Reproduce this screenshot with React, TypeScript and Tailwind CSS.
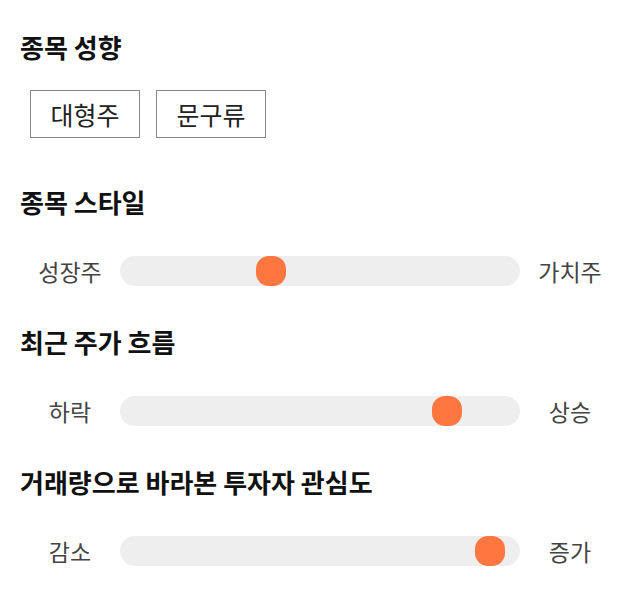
const font = { fontFamily: '"Noto Sans CJK KR", "Noto Sans", sans-serif' };

const Heading = ({ children, className = '' }: { children: string; className?: string }) => (
  <h2 className={`text-[26px] leading-[34px] font-bold text-[#111] ${className}`}>{children}</h2>
);

const SliderRow = ({ left, right, pos, className = '' }: { left: string; right: string; pos: number; className?: string }) => (
  <div className={`flex items-center h-[30px] ${className}`}>
    <div className="w-[100px] text-center text-[23px] leading-[30px] text-[#444]">{left}</div>
    <div className="relative flex-1 h-[30px] rounded-full bg-[#eeeeee]">
      <div
        className="absolute top-0 w-[30px] h-[30px] rounded-[13px] bg-[#ff7740]"
        style={{ left: pos }}
      />
    </div>
    <div className="w-[100px] text-center text-[23px] leading-[30px] text-[#444]">{right}</div>
  </div>
);

export default function App() {
  return (
    <div className="w-[640px] h-[606px] bg-white px-5 pt-[30px]" style={font}>
      <Heading>종목 성향</Heading>
      <div className="flex gap-4 mt-[26px] pl-[10px]">
        <button className="w-[110px] h-[48px] border border-[#888] text-[25px] leading-[30px] text-[#222]">대형주</button>
        <button className="w-[110px] h-[48px] border border-[#888] text-[25px] leading-[30px] text-[#222]">문구류</button>
      </div>

      <Heading className="mt-[47px]">종목 스타일</Heading>
      <SliderRow className="mt-[37px]" left="성장주" right="가치주" pos={136} />

      <Heading className="mt-[39px]">최근 주가 흐름</Heading>
      <SliderRow className="mt-[37px]" left="하락" right="상승" pos={312} />

      <Heading className="mt-[39px]">거래량으로 바라본 투자자 관심도</Heading>
      <SliderRow className="mt-[37px]" left="감소" right="증가" pos={355} />
    </div>
  );
}
